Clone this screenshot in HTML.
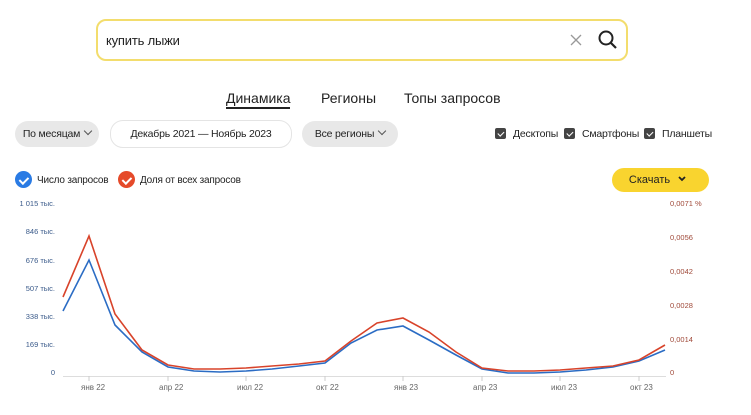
<!DOCTYPE html>
<html><head><meta charset="utf-8"><style>
body{margin:0;width:751px;height:415px;background:#fff;font-family:"Liberation Sans","DejaVu Sans",sans-serif;position:relative;overflow:hidden;color:#222}
.a{position:absolute}
.search{left:96px;top:19px;width:528px;height:38px;border:2px solid #f3dd6d;border-radius:10px}
.pill{height:26px;border-radius:13px;background:#e8e8e8;font-size:10.5px;line-height:26px;text-align:center;top:121px;letter-spacing:-0.2px}
.cb{width:11px;height:11px;background:#444;border-radius:2px;top:128px}
.cb::after{content:"";position:absolute;left:3.5px;top:1.5px;width:2.5px;height:5px;border:solid #fff;border-width:0 1.6px 1.6px 0;transform:rotate(45deg)}
.lbl{font-size:10.5px;top:128px;letter-spacing:-0.2px}
.dot{width:17px;height:17px;border-radius:50%;top:171px}
.dot::after{content:"";position:absolute;left:6px;top:3.5px;width:3.5px;height:7px;border:solid #fff;border-width:0 2px 2px 0;transform:rotate(45deg)}
.yl{font-size:7.5px;color:#3a5a8a;text-align:right;width:55px;left:0}
.yr{font-size:7.5px;color:#a04a3a;left:670px}
.xl{font-size:8px;color:#666;top:383px}
.chev{display:inline-block;width:5px;height:5px;border:solid #555;border-width:0 1px 1px 0;transform:rotate(45deg);margin-left:5px;position:relative;top:-3px}
</style></head><body>
<div class="a search"></div>
<div class="a" style="left:106px;top:33px;font-size:13px;letter-spacing:-0.2px">купить лыжи</div>
<svg class="a" style="left:569px;top:33px" width="14" height="14"><path d="M2 2L12 12M12 2L2 12" stroke="#999" stroke-width="1.3"/></svg>
<svg class="a" style="left:597px;top:29px" width="22" height="22"><circle cx="9" cy="9" r="6.5" fill="none" stroke="#222" stroke-width="2"/><path d="M14 14L19 19" stroke="#222" stroke-width="2.2"/></svg>
<div class="a" style="left:226px;top:90px;font-size:14px;border-bottom:2px solid #222;padding-bottom:1px">Динамика</div>
<div class="a" style="left:321px;top:90px;font-size:14px">Регионы</div>
<div class="a" style="left:404px;top:90px;font-size:14px">Топы запросов</div>
<div class="a pill" style="left:15px;width:84px">По месяцам<span class="chev"></span></div>
<div class="a pill" style="left:110px;width:180px;background:#fff;border:1px solid #e4e4e4;top:120px">Декабрь 2021 — Ноябрь 2023</div>
<div class="a pill" style="left:302px;width:96px">Все регионы<span class="chev"></span></div>
<div class="a cb" style="left:495px"></div><div class="a lbl" style="left:513px">Десктопы</div>
<div class="a cb" style="left:564px"></div><div class="a lbl" style="left:582px">Смартфоны</div>
<div class="a cb" style="left:644px"></div><div class="a lbl" style="left:662px">Планшеты</div>
<div class="a dot" style="left:15px;background:#2a7be4"></div><div class="a" style="left:37px;top:175px;font-size:10px;letter-spacing:-0.2px">Число запросов</div>
<div class="a dot" style="left:118px;background:#e54a2a"></div><div class="a" style="left:140px;top:175px;font-size:10px;letter-spacing:-0.2px">Доля от всех запросов</div>
<div class="a" style="left:612px;top:168px;width:97px;height:24px;border-radius:12px;background:#f9d42f;font-size:11px;line-height:24px;text-align:center">Скачать<svg width="22" height="10" style="vertical-align:-1px"><path d="M9 3L12 6L15 3" fill="none" stroke="#222" stroke-width="1.8"/></svg></div>
<div class="a yl" style="top:199px">1 015 тыс.</div>
<div class="a yl" style="top:227px">846 тыс.</div>
<div class="a yl" style="top:256px">676 тыс.</div>
<div class="a yl" style="top:284px">507 тыс.</div>
<div class="a yl" style="top:312px">338 тыс.</div>
<div class="a yl" style="top:340px">169 тыс.</div>
<div class="a yl" style="top:368px">0</div>
<div class="a yr" style="top:199px">0,0071 %</div>
<div class="a yr" style="top:233px">0,0056</div>
<div class="a yr" style="top:267px">0,0042</div>
<div class="a yr" style="top:301px">0,0028</div>
<div class="a yr" style="top:335px">0,0014</div>
<div class="a yr" style="top:368px">0</div>
<svg class="a" style="left:0;top:0" width="751" height="415">
<path d="M63 376.5H666" stroke="#ddd"/>
<g stroke="#ccc"><path d="M89 376v5M168 376v5M246 376v5M325 376v5M403 376v5M482 376v5M560 376v5M639 376v5"/></g>
<polyline fill="none" stroke="#2b6cc4" stroke-width="1.6" points="63,311 89,260 115,325 142,352 168,367 194,371 220,372 246,371 272,369 299,366 325,363 351,343 377,330 403,326 429,340 456,355 482,369 508,373 534,373 560,372 586,370 613,367 639,361 665,350"/>
<polyline fill="none" stroke="#d8432a" stroke-width="1.6" points="63,297 89,236 115,314 142,350 168,365 194,369 220,369 246,368 272,366 299,364 325,361 351,341 377,323 403,318 429,332 456,352 482,368 508,371 534,371 560,370 586,368 613,366 639,360 665,345"/>
</svg>
<div class="a xl" style="left:81px">янв 22</div>
<div class="a xl" style="left:159px">апр 22</div>
<div class="a xl" style="left:237px">июл 22</div>
<div class="a xl" style="left:316px">окт 22</div>
<div class="a xl" style="left:394px">янв 23</div>
<div class="a xl" style="left:473px">апр 23</div>
<div class="a xl" style="left:551px">июл 23</div>
<div class="a xl" style="left:630px">окт 23</div>
</body></html>
